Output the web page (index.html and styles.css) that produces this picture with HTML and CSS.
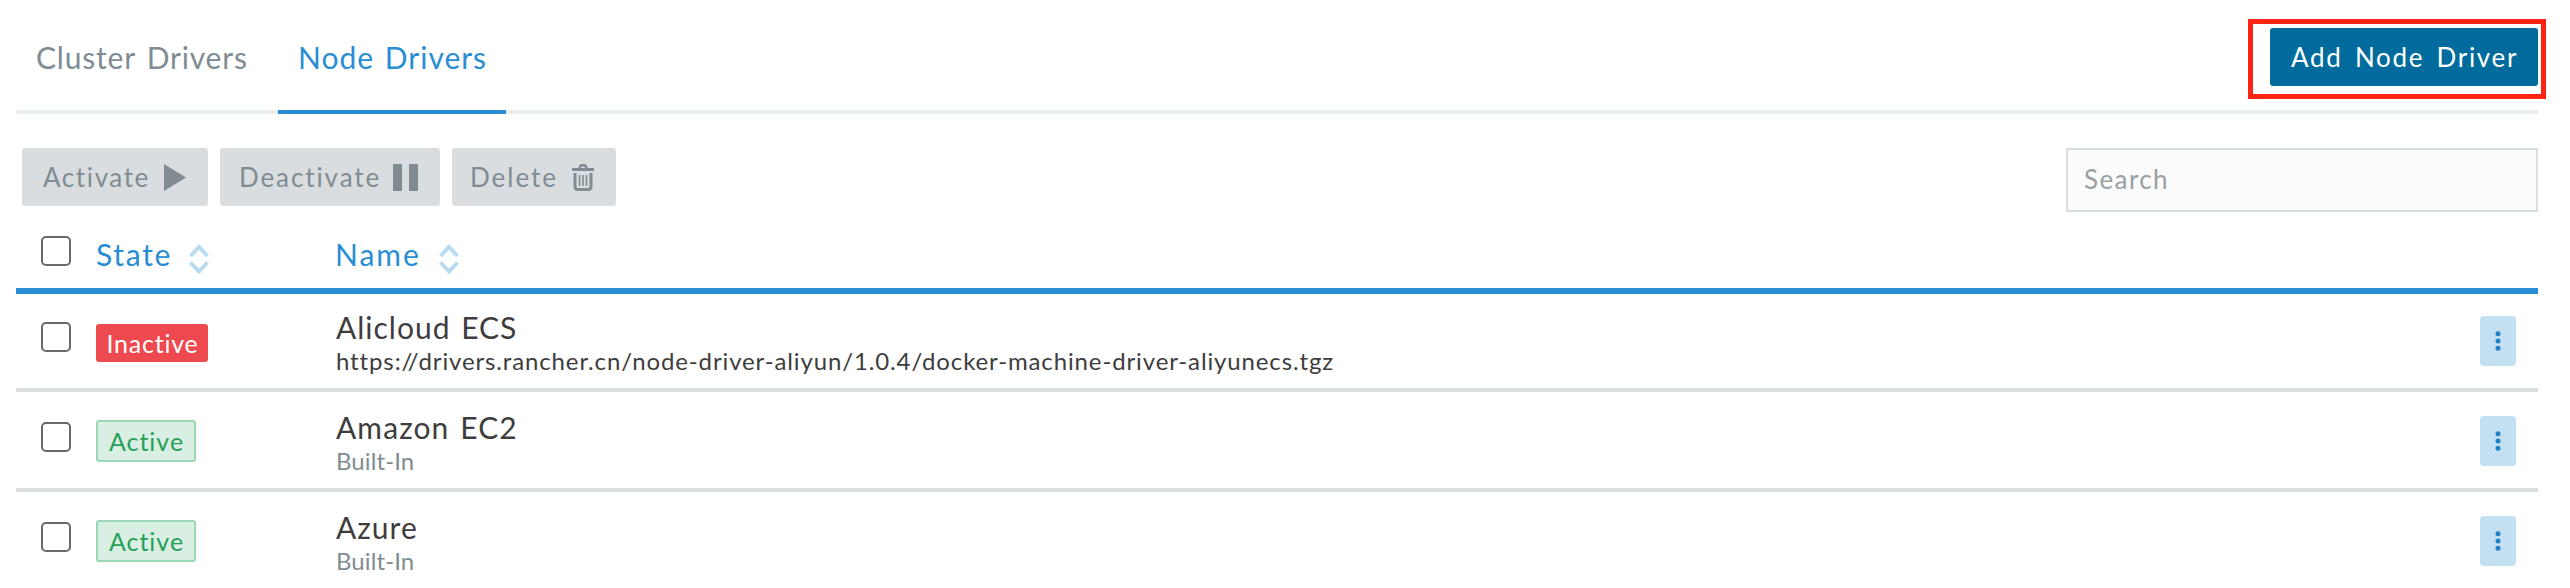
FILE: index.html
```html
<!DOCTYPE html>
<html lang="en">
<head>
<meta charset="utf-8">
<title>Node Drivers</title>
<link rel="stylesheet" href="styles.css">
</head>
<body>
<svg class="defs" width="0" height="0" aria-hidden="true">
  <symbol id="sort" viewBox="0 0 20 30"><path d="M1.500 12 10 3l8.500 9M1.500 18.500l8.500 9 8.500-9" fill="none" stroke="currentColor" stroke-width="4"/></symbol>
  <symbol id="dots" viewBox="0 0 6 20"><circle cx="3" cy="2.7" r="2.5"/><circle cx="3" cy="10" r="2.5"/><circle cx="3" cy="17.3" r="2.5"/></symbol>
</svg>
<main class="page">
  <header class="header">
    <nav class="tabs">
      <a class="tab"><span class="t-cluster">Cluster Drivers</span></a>
      <a class="tab tab-active"><span class="t-node">Node Drivers</span></a>
    </nav>
    <div class="highlight"><button class="btn btn-primary"><span class="t-add">Add Node Driver</span></button></div>
  </header>
  <section class="toolbar">
    <div class="actions">
      <button class="btn b-activate"><span class="t-activate">Activate</span>
        <svg width="22" height="27" viewBox="0 0 22 27"><path d="M0 0v27l22-13.5z"/></svg></button>
      <button class="btn b-deactivate"><span class="t-deactivate">Deactivate</span>
        <svg width="25" height="27" viewBox="0 0 25 27"><path d="M0 0h9v27H0zM16 0h9v27h-9z"/></svg></button>
      <button class="btn b-delete"><span class="t-delete">Delete</span>
        <svg width="22" height="27" viewBox="0 0 22 27"><path d="M0 4h6.500q.5-4 3-4h3q2.500 0 3 4H22v3H0zM9 4h4q0-1.500-1-1.500h-2Q9 2.500 9 4z"/><path d="M3 9v13.500q0 3 3 3h10q3 0 3-3V9" fill="none" stroke="currentColor" stroke-width="3"/><path d="M7.500 11v11M11 11v11M14.500 11v11" fill="none" stroke="currentColor" stroke-width="1.600"/></svg></button>
    </div>
    <input class="search" type="text" placeholder="Search">
  </section>
  <section class="table">
    <div class="row head">
      <i class="check"></i>
      <div class="th"><span class="t-state">State</span><svg class="sort" width="20" height="30"><use href="#sort"/></svg></div>
      <div class="th"><span class="t-name">Name</span><svg class="sort" width="20" height="30"><use href="#sort"/></svg></div>
    </div>
    <div class="row">
      <i class="check"></i>
      <div><span class="badge inactive"><span class="t-inactive">Inactive</span></span></div>
      <div class="driver"><div class="title"><span class="t-ali">Alicloud ECS</span></div><div class="sub url"><span class="t-url">https://drivers.rancher.cn/node-driver-aliyun/1.0.4/docker-machine-driver-aliyunecs.tgz</span></div></div>
      <button class="more"><svg width="6" height="20"><use href="#dots"/></svg></button>
    </div>
    <div class="row">
      <i class="check"></i>
      <div><span class="badge active"><span class="t-active">Active</span></span></div>
      <div class="driver"><div class="title"><span class="t-amazon">Amazon EC2</span></div><div class="sub"><span class="t-built">Built-In</span></div></div>
      <button class="more"><svg width="6" height="20"><use href="#dots"/></svg></button>
    </div>
    <div class="row">
      <i class="check"></i>
      <div><span class="badge active"><span class="t-active">Active</span></span></div>
      <div class="driver"><div class="title"><span class="t-azure">Azure</span></div><div class="sub"><span class="t-built">Built-In</span></div></div>
      <button class="more"><svg width="6" height="20"><use href="#dots"/></svg></button>
    </div>
  </section>
</main>
</body>
</html>
```
FILE: styles.css
```css
* { box-sizing: border-box; }
html, body { margin: 0; height: 588px; overflow: hidden; background: #fff; }
body, button, input { font-family: Lato, "Open Sans", sans-serif; font-weight: 400; }
.defs { display: none; }
.page { padding: 0 32px 0 16px; color: #3d3d3d; }

.header { height: 114px; display: flex; justify-content: space-between; align-items: flex-start; border-bottom: 4px solid #e8eeed; }
.tabs { display: flex; gap: 8px; }
.tab { height: 114px; width: 254px; padding: 39px 0 0 20px; font-size: 30px; line-height: 36px; color: #808c92; white-space: nowrap; }
.tab-active { width: 228px; color: #298dd3; border-bottom: 4px solid #298dd3; }
.highlight { width: 298px; height: 80px; margin: 19px -8px 0 0; padding: 4px 3px 0 17px; border: 5px solid #ff2314; }

.btn { display: flex; align-items: center; height: 58px; border: 0; border-radius: 3px; padding: 0 0 0 21px; background: #d9dde0; color: #808c92; font-size: 26px; white-space: nowrap; }
.btn svg { fill: currentColor; flex: none; }
.btn-primary { width: 268px; background: #006b9c; color: #fff; }

.toolbar { height: 98px; padding: 34px 0 0 6px; display: flex; justify-content: space-between; align-items: flex-start; }
.actions { display: flex; gap: 12px; }
.b-activate, .b-deactivate, .b-delete { justify-content: space-between; }
.b-activate { width: 186px; padding-right: 22px; }
.b-deactivate { width: 220px; padding: 0 22px 0 19px; }
.b-delete { width: 164px; padding: 0 22px 0 18px; }
.search { width: 472px; height: 64px; border: 2px solid #d8dfe1; background: #fafcfb; padding: 0 16px 2px; font-size: 26px; color: #3d3d3d; letter-spacing: 1.4px; }
.search::placeholder { color: #999fa3; opacity: 1; }

.row { display: grid; grid-template-columns: 55px 240px 1fr 36px; align-items: start; height: 100px; padding: 22px 22px 0 25px; border-bottom: 4px solid #d9dde0; }
.row + .row { height: 98px; }
.row + .row + .row { height: 100px; padding-top: 24px; }
.row:last-child { border: 0; }
.check { width: 30px; height: 30px; margin-top: 6px; border: 2px solid #696969; border-radius: 5px; background: #fff; }
.row.head { height: 82px; padding-top: 18px; border-bottom: 6px solid #298dd3; }
.th { display: flex; align-items: flex-start; padding-top: 6px; font-size: 30px; line-height: 36px; color: #298dd3; }
.th > span:first-child { width: 93px; white-space: nowrap; }
.th:nth-child(3) > span:first-child { width: 104px; margin-left: -1px; }
.sort { color: #b8dbf1; margin-top: 8px; }
.badge { display: inline-flex; align-items: center; justify-content: center; border-radius: 3px; font-size: 25px; line-height: 30px; margin-top: 4px; vertical-align: top; }
.inactive { width: 112px; height: 38px; margin-top: 8px; background: #ee494e; color: #fff; }
.active { width: 100px; height: 42px; border: 2px solid #9dd8b6; background: #d9efe3; color: #27a058; }
.title { height: 36px; font-size: 30px; line-height: 36px; margin-top: -7px; white-space: nowrap; }
.sub { height: 30px; margin-top: 1px; font-size: 24px; line-height: 30px; white-space: nowrap; color: #808c92; }
.url { height: 28px; overflow: hidden; color: #3d3d3d; }
.more { width: 36px; height: 50px; padding: 0; display: flex; align-items: center; justify-content: center; border: 0; border-radius: 4px; background: #c4e0f3; }
.more svg { fill: #1f82c8; }

/* Tracking per label */
.t-cluster { letter-spacing: .8px; word-spacing: 3px; }
.t-node { letter-spacing: 1px; word-spacing: 2px; }
.t-add { letter-spacing: 1.7px; word-spacing: 4px; }
.t-activate { letter-spacing: 1.6px; }
.t-deactivate { letter-spacing: 1.9px; }
.t-delete { letter-spacing: 2px; }
.t-state { letter-spacing: 1.7px; }
.t-name { letter-spacing: 2px; }
.t-inactive { letter-spacing: .8px; margin-right: -1px; }
.t-active { letter-spacing: 1px; margin-right: -1px; }
.t-ali { letter-spacing: 1px; word-spacing: 2px; }
.t-amazon { letter-spacing: 1.1px; word-spacing: 2px; }
.t-azure { letter-spacing: 1px; }
.t-url { letter-spacing: .87px; }
.t-built { letter-spacing: .1px; }
```
